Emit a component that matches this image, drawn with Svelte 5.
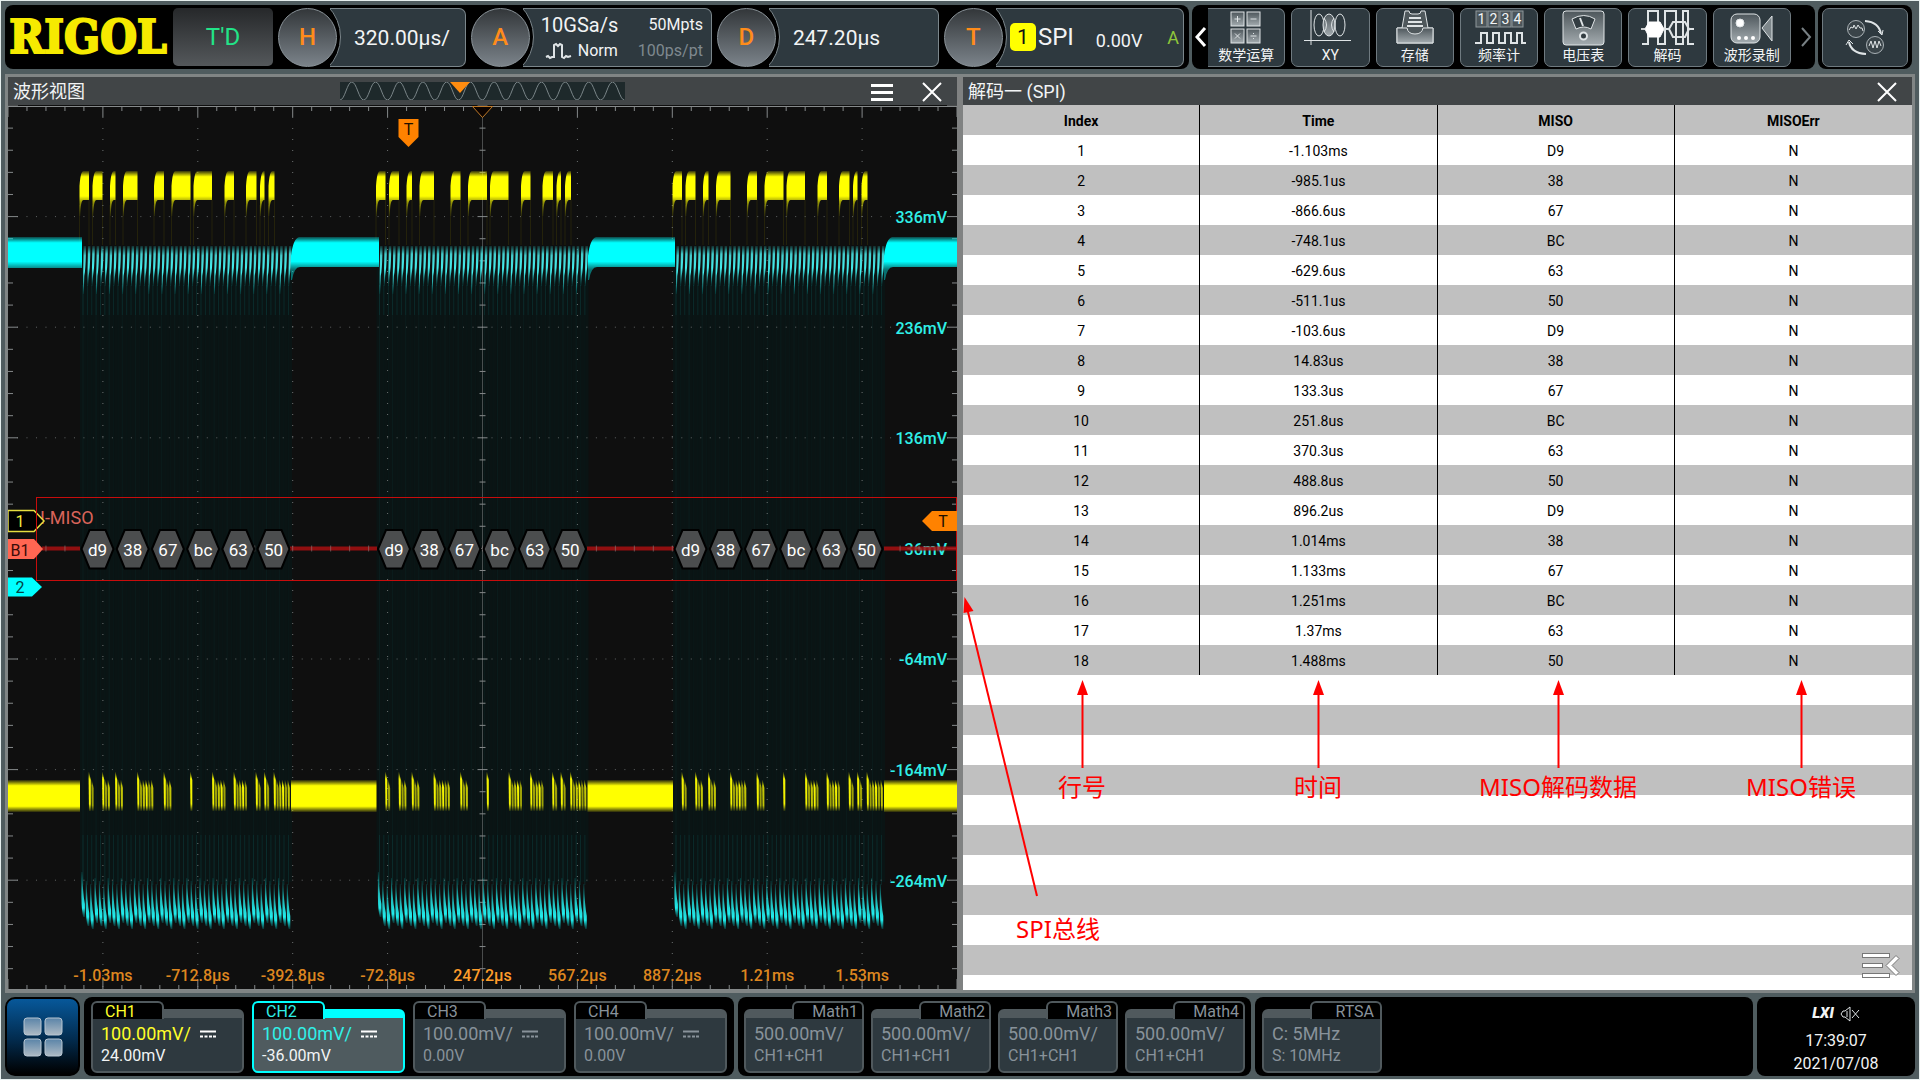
<script>
  const period = 296.5;
  const starts = [0, 1, 2].map((i) => i * period);
  const highs = [[79.5, 89], [92.5, 102.5], [110, 115.5], [123, 137.5], [154, 164], [171.5, 190.5], [193.5, 212], [224.5, 234], [246, 256.5], [260, 264.5], [268.5, 274.5]];
  const lows = [[88.5, 92.5], [102, 110], [115, 123], [137, 154.5], [163.5, 171.5], [190, 193], [212, 225], [233.5, 246.5], [255.5, 259.5], [264, 268], [273.5, 291]];
  const idle = [[8, 80], [291, 376.5], [587.5, 673], [884, 957]];
  const clocks = Array.from({ length: 48 }, (_, i) => 83 + i * 4.37);
  const bytes = ['d9', '38', '67', 'bc', '63', '50'];

  const divX = 94.9;
  const divY = 110.6;
  const cols = Array.from({ length: 9 }, (_, i) => 8 + (i + 1) * divX);
  const rowsY = [1, 2, 3, 5, 6, 7].map((i) => 106 + i * divY);
  const xTicks = Array.from({ length: 51 }, (_, i) => ({ x: 8 + (i * divX) / 5, long: i % 5 === 0 }));
  const yTicks = Array.from({ length: 41 }, (_, i) => ({ y: 106 + (i * divY) / 5, long: i % 5 === 0 }));

  const stripes = lows.flatMap(([a, b]) => {
    const out = [];
    for (let x = a, k = 0; x < b - 1; x += 2.8, k++) out.push({ x, top: k === 0 ? 772 : 780, o: [0.95, 0.6, 0.75][k % 3] });
    return out;
  });

  const volts = ['336mV', '236mV', '136mV', '36mV', '-64mV', '-164mV', '-264mV'];
  const times = ['-1.03ms', '-712.8µs', '-392.8µs', '-72.8µs', '247.2µs', '567.2µs', '887.2µs', '1.21ms', '1.53ms'];

  const data = ['D9', '38', '67', 'BC', '63', '50'];
  const stamps = ['-1.103ms', '-985.1us', '-866.6us', '-748.1us', '-629.6us', '-511.1us', '-103.6us', '14.83us', '133.3us', '251.8us', '370.3us', '488.8us', '896.2us', '1.014ms', '1.133ms', '1.251ms', '1.37ms', '1.488ms'];
  const records = stamps.map((t, i) => [i + 1, t, data[i % 6], 'N']);

  const notes = [[1082, '行号'], [1318, '时间'], [1558, 'MISO解码数据'], [1801, 'MISO错误']];

  const channels = [
    { name: 'CH1', scale: '100.00mV/', offset: '24.00mV', kind: 'one' },
    { name: 'CH2', scale: '100.00mV/', offset: '-36.00mV', kind: 'two' },
    { name: 'CH3', scale: '100.00mV/', offset: '0.00V', kind: 'off' },
    { name: 'CH4', scale: '100.00mV/', offset: '0.00V', kind: 'off' }
  ];
  const maths = ['Math1', 'Math2', 'Math3', 'Math4'];
  const tools = [['math', '数学运算'], ['xy', 'XY'], ['store', '存储'], ['counter', '频率计'], ['meter', '电压表'], ['decode', '解码'], ['record', '波形录制']];
  const miniWave = 'M341 100' + Array.from({ length: 12 }, () => 'c5 0 7 -18 11.85 -18s7 18 11.85 18').join('');
</script>

<div class="app">
  <header>
    <div class="group status">
      <div class="logo">RIGOL</div>
      <button class="run">T'D</button>
      <button class="knob">H</button>
      <div class="panel p1"><span class="big">320.00µs/</span></div>
      <button class="knob">A</button>
      <div class="panel p2">
        <div class="acq">
          <span class="rate">10GSa/s</span><span class="right">50Mpts</span>
          <span class="mode">
            <svg width="28" height="18" viewBox="0 0 28 18"><path d="M1 15l2-1 2 2 2-1h2V3l2-1 2 2 2-2 2 1v12l2 1 2-2 2 1 3-1" /></svg>Norm
          </span><span class="right dim">100ps/pt</span>
        </div>
      </div>
      <button class="knob">D</button>
      <div class="panel p3"><span class="big">247.20µs</span></div>
      <button class="knob">T</button>
      <div class="panel p4">
        <span class="src">1</span><span class="spi">SPI</span><span class="level">0.00V</span><span class="auto">A</span>
      </div>
    </div>

    <div class="group toolbar">
      <button class="arrow" aria-label="上一页"><svg width="12" height="22" viewBox="0 0 12 22"><path d="M10 2L2 11l8 9" /></svg></button>
      {#each tools as [id, label], i}
        <button class="tool" class:first={i === 0}>
          <svg class="ico" width="56" height="36" viewBox="0 0 56 36">
            <defs><linearGradient id="metal-{id}" x1="0" y1="0" x2="0" y2="1"><stop offset="0" stop-color="#4d565b" /><stop offset="1" stop-color="#a4acb0" /></linearGradient></defs>
            {#if id === 'math'}
              {#each [[13, 2], [29, 2], [13, 19], [29, 19]] as [x, y]}
                <rect {x} {y} width="13" height="14" fill="url(#metal-math)" />
              {/each}
              <path d="M16.500 9h6M19.500 6v6M32.500 9h6M17 23.500l5 5M22 23.500l-5 5M32.500 26h6M35.500 23v1M35.500 28v1" />
            {:else if id === 'xy'}
              <path d="M9 0v35M2 30.500h47" />
              <g><ellipse cx="17" cy="15" rx="5" ry="11" /><ellipse cx="27" cy="15" rx="6" ry="11" fill="url(#metal-xy)" /><ellipse cx="38" cy="15" rx="5" ry="11" /><path d="M22 8q5 7 0 14M32 8q-5 7 0 14" /></g>
            {:else if id === 'store'}
              <path d="M18 1h4q0 3 3 3h6q3 0 3-3h4l3 17h5v15H10V18h5z" fill="#4f585c" />
              <path d="M10 18h10q1 6 8 6t8-6h10v15H10z" fill="url(#metal-store)" />
              <path d="M22 8h12M21 12h14M20 16h16" stroke-width="2" />
            {:else if id === 'counter'}
              {#each ['1', '2', '3', '4'] as d, k}
                <rect x={5 + k * 12} y="1" width="11" height="16" fill="#4c565b" stroke="#8e979b" />
                <text x={10.5 + k * 12} y="14" class="digit">{d}</text>
              {/each}
              <path d="M4 33h6V23h6v10h6V23h6v10h6V23h6v10h6V23h5v10h4" stroke-width="2" />
            {:else if id === 'meter'}
              <rect x="8" y="1" width="41" height="34" rx="3" fill="url(#metal-meter)" />
              <path d="M17 9q12-7 23 0l-4 10q-7-4-15 0z" fill="#333d42" /><path d="M25 8l3 8" stroke-width="2" />
              <circle cx="28.500" cy="26" r="3.500" fill="#333d42" stroke-width="2" />
            {:else if id === 'decode'}
              <path d="M2 34h6V1h10v33h7V1h11v33h7V1h5v33h6" stroke-width="2" />
              <path d="M1 19h4l4-7h11l4 7-4 8H9l-4-8z" fill="#fff" stroke="#fff" /><path d="M24 19h5l4-7h12l4 7-4 8H33l-4-8M49 19h5" stroke-width="2" />
            {:else}
              <rect x="7" y="4" width="29" height="29" rx="6" fill="url(#metal-record)" /><path d="M38 18l10-12v25z" fill="#7d868a" />
              <circle cx="16" cy="13" r="4" fill="#fff" /><g fill="#fff" stroke="none"><circle cx="15" cy="28" r="2" /><circle cx="22" cy="28" r="2" /><circle cx="29" cy="28" r="2" /></g>
            {/if}
          </svg>
          <span>{label}</span>
        </button>
      {/each}
      <button class="arrow dimmed" aria-label="下一页"><svg width="12" height="22" viewBox="0 0 12 22"><path d="M2 2l8 9-8 9" /></svg></button>
    </div>

    <div class="group swap">
      <button class="tool" aria-label="切换">
        <svg class="ico" width="44" height="40" viewBox="0 0 44 40">
          <circle cx="13" cy="12" r="8.500" fill="#3a4449" stroke="#aab2b6" /><circle cx="32" cy="28" r="8.500" fill="#3a4449" stroke="#aab2b6" />
          <path d="M6 13l2-3 2 1 1-3 2 4 2-4 2 3 2 0 1 3M26 29l2-5 2 7 2-7 2 7 2-7 2 5" />
          <path d="M22 4q14 1 16 13M23 37Q8 36 6 25" stroke-width="2" /><path d="M35 14l4 4 1-5M3 28l3-5 4 4" />
        </svg>
      </button>
    </div>
  </header>

  <main>
    <section class="window">
      <div class="title">
        <h2>波形视图</h2>
        <svg class="mini" width="285" height="18" viewBox="341 82 285 18"><rect x="341" y="82" width="285" height="18" fill="#1e292b" stroke="none" /><path d={miniWave} /><path class="tri" d="M451 82h20l-10 11z" /></svg>
        <span class="ctl">
          <button aria-label="菜单"><svg width="24" height="20" viewBox="0 0 24 20"><path d="M1 3.500h22M1 10.500h22M1 17.500h22" /></svg></button>
          <button aria-label="关闭"><svg width="20" height="20" viewBox="0 0 20 20"><path class="thin" d="M1 1l18 18M19 1L1 19" /></svg></button>
        </span>
      </div>
      <div class="canvas">
        <svg class="scope" viewBox="8 105 949 885">
          <defs>
            <linearGradient id="yh" x1="0" y1="170" x2="0" y2="215" gradientUnits="userSpaceOnUse"><stop offset="0" stop-color="#ff0" stop-opacity="0" /><stop offset=".15" stop-color="#ff0" /><stop offset=".58" stop-color="#ff0" /><stop offset=".7" stop-color="#ff0" stop-opacity=".6" /><stop offset="1" stop-color="#ff0" stop-opacity=".1" /></linearGradient>
            <linearGradient id="band" x1="0" y1="0" x2="0" y2="1"><stop offset="0" stop-color="#ff0" stop-opacity=".1" /><stop offset=".18" stop-color="#ff0" /><stop offset=".82" stop-color="#ff0" /><stop offset="1" stop-color="#ff0" stop-opacity=".1" /></linearGradient>
            <linearGradient id="cband" x1="0" y1="236" x2="0" y2="270" gradientUnits="userSpaceOnUse"><stop offset="0" stop-color="#0ff" stop-opacity=".1" /><stop offset=".2" stop-color="#0ff" /><stop offset=".75" stop-color="#0ff" /><stop offset=".95" stop-color="#0ff" stop-opacity=".5" /><stop offset="1" stop-color="#0ff" stop-opacity=".4" /></linearGradient>
            <linearGradient id="ch" x1="0" y1="0" x2="0" y2="1"><stop offset="0" stop-color="#2bb" stop-opacity=".2" /><stop offset=".2" stop-color="#4cc" /><stop offset=".55" stop-color="#4ee" /><stop offset=".75" stop-color="#3cc" stop-opacity=".8" /><stop offset="1" stop-color="#0aa" stop-opacity=".15" /></linearGradient>
            <linearGradient id="cl" x1="0" y1="0" x2="0" y2="1"><stop offset="0" stop-color="#0cc" stop-opacity=".15" /><stop offset=".4" stop-color="#2cc" stop-opacity=".85" /><stop offset=".8" stop-color="#2ee" /><stop offset="1" stop-color="#0cc" stop-opacity=".2" /></linearGradient>
          </defs>
          {#each starts as s}
            <rect x={80 + s} y="270" width="212" height="612" fill="#0a1414" />
            {#each clocks as c, i}
              <path d="M{c + s} {285}V885" stroke="#0b2423" stroke-opacity={i % 3 ? 0.2 : 0.5} />
              <path d="M{c + s} 285v30M{c + s} 835v50" stroke="#0e4342" stroke-opacity=".45" />
            {/each}
            {#each highs as [a, b]}
              <path d="M{a + s} 205V245M{b + s} 200V245" stroke="#3a3508" stroke-opacity=".5" />
            {/each}
          {/each}
          <g class="grid">
            {#each cols as x, i}
              {#if i === 4}<path d="M{x} 106V990" stroke-opacity=".5" />{:else}<path class="vdots" d="M{x} 117V990" />{/if}
            {/each}
            {#each rowsY as y}<path class="hdots" d="M17 {y}H957" />{/each}
            {#each xTicks as t}
              <path d="M{t.x} 106v{t.long ? 11 : 5}M{t.x} 990v{t.long ? -11 : -5}" />
            {/each}
            {#each yTicks as t}
              <path d="M8 {t.y}h{t.long ? 10 : 5}M957 {t.y}h{t.long ? -10 : -5}M{t.long ? 477.500 : 479.500} {t.y}h{t.long ? 10 : 6}" />
            {/each}
            <path d="M8 106.500H957M8 989.500H957" />
          </g>
          {#each starts as s}
            {#each clocks as c, i}
              <path d="M{c + s + 0.6} 246h2.400q0 20-1.700 30l-.6 {i % 3 ? 10 : 18}h-.8z" fill="url(#ch)" />
              <path d="M{c + s - 1.6} {i === 0 ? 872 : 878 + (i % 3) * 3}h1q.2 20 2.500 32v13h-1.600q-1.700-6-1.900-20z" fill="url(#cl)" />
            {/each}
            {#each highs as [a, b]}
              <path d="M{a + s} 216V186Q{a + s + 1} 171 {a + s + 4} 171H{b + s}V200H{Math.min(a + s + 4, b + s)}Q{a + s + 1} 200 {a + s + 0.8} 216z" fill="url(#yh)" />
            {/each}
            {#each stripes as t}
              <path d="M{t.x + s} {t.top}h.6l1.700 8V811h-1.800z" fill="url(#band)" opacity={t.o} />
            {/each}
          {/each}
          {#each idle as [a, b]}
            <rect x={a} y="780" width={b - a} height="32" fill="url(#band)" />
          {/each}
          <path d="M8 237H82V268H8zM291 280V256Q293 239 299 237H379V267H300Q294 267 292 280zM588 280V256Q590 239 596 237H675V267H597Q591 267 589 280zM884 280V256Q886 239 892 237H957V267H893Q887 267 885 280z" fill="url(#cband)" />

          {#each volts as v, i}<text class="volt" x="947" y={223 + i * divY}>{v}</text>{/each}
          {#each times as t, i}<text class="time" class:now={i === 4} x={cols[i]} y="981">{t}</text>{/each}

          <path class="bus" d="M42 548.500H80M290 548.500H377M587 548.500H674M884 548.500H957" />
          {#each xTicks as t}<path class="midtick" d="M{t.x} 545.500v6" />{/each}
          {#each starts as s}
            {#each bytes as b, i}
              {@const x = 97.5 + i * 35.2 + s}
              <path class="hex" d="M{x - 16} 549l8-19h16l8 19-8 19.500h-16z" />
              <text class="byte" {x} y="555.500">{b}</text>
            {/each}
          {/each}
          <text class="busname" x="40" y="524">I-MISO</text>
          <path d="M8 510.500H34L44 521 34 531.500H8z" fill="#000" stroke="#e6de40" stroke-width="1.500" />
          <text class="mark" x="20" y="527" fill="#f2ea40">1</text>
          <rect x="36.500" y="497.500" width="920" height="83" stroke="#c80c0c" />
          <path d="M8 539H34L43 549 34 559H8z" fill="#ff6652" /><text class="mark" x="20" y="555.500" fill="#3a0c08">B1</text>
          <path d="M8 577.500H32L42 587 32 596.500H8z" fill="#0ff" /><text class="mark" x="20" y="593" fill="#044">2</text>
          <path d="M957 511H932L922 521 932 531H957z" fill="#ff8200" /><text class="mark" x="943" y="527" fill="#201000">T</text>
          <path d="M398.500 119h20v18l-10 10-10-10z" fill="#ff8200" /><text class="mark" x="408.500" y="135" fill="#201000">T</text>
          <path d="M472.500 106.500h20l-10 11z" fill="#0c0300" stroke="#c07a28" />
        </svg>
      </div>
    </section>

    <section class="window">
      <div class="title">
        <h2>解码一 (SPI)</h2>
        <span class="ctl"><button aria-label="关闭"><svg width="20" height="20" viewBox="0 0 20 20"><path class="thin" d="M1 1l18 18M19 1L1 19" /></svg></button></span>
      </div>
      <div class="canvas list">
        <table>
          <thead><tr><th>Index</th><th>Time</th><th>MISO</th><th>MISOErr</th></tr></thead>
          <tbody>
            {#each records as r}<tr>{#each r as cell}<td>{cell}</td>{/each}</tr>{/each}
          </tbody>
        </table>
        <svg class="notes" viewBox="963 105 949 885">
          {#each notes as [x, label]}
            <path d="M{x + 0.5} 692V768" class="line" /><path d="M{x + 0.5} 680l5.500 15h-11z" class="head" />
            <text {x} y="796">{label}</text>
          {/each}
          <path d="M967.500 610L1037 896" class="line" /><path d="M964.500 597l9 14-10 2z" class="head" />
          <text x="1058" y="938">SPI总线</text>
          <g class="fold"><rect x="1862.500" y="953.500" width="27" height="4" /><rect x="1862.500" y="963.500" width="20" height="4" /><rect x="1862.500" y="973.500" width="27" height="4" /><path d="M1886 965.500l10-10 3 3-7 7 7 7-3 3z" /></g>
        </svg>
      </div>
    </section>
  </main>

  <footer>
    <button class="home" aria-label="主菜单">
      <svg width="40" height="40" viewBox="0 0 40 40">
        <defs><linearGradient id="tile" x1="0" y1="0" x2="0" y2="1"><stop offset="0" stop-color="#5a84a8" /><stop offset="1" stop-color="#aebac4" /></linearGradient></defs>
        {#each [[1, 1], [22, 1], [1, 22], [22, 22]] as [x, y]}<rect {x} {y} width="17" height="17" rx="3" fill="url(#tile)" stroke="#b8c6d2" />{/each}
      </svg>
    </button>
    <div class="group cards">
      {#each channels as c}
        <button class="card {c.kind}">
          <span class="tab">{c.name}</span>
          <span class="body"><span class="scale">{c.scale}<svg width="16" height="8" viewBox="0 0 16 8"><path d="M0 1.500h16M0 6.500h3M4.500 6.500h3M9 6.500h3M13 6.500h3" /></svg></span><span class="offset">{c.offset}</span></span>
        </button>
      {/each}
    </div>
    <div class="group cards math">
      {#each maths as m}
        <button class="card off end"><span class="tab">{m}</span><span class="body"><span class="scale">500.00mV/</span><span class="offset">CH1+CH1</span></span></button>
      {/each}
    </div>
    <div class="group cards rest">
      <button class="card off end rtsa"><span class="tab">RTSA</span><span class="body"><span class="scale">C: 5MHz</span><span class="offset">S: 10MHz</span></span></button>
    </div>
    <div class="group clock">
      <span class="lxi"><b>LXI</b><svg width="20" height="16" viewBox="0 0 20 16"><path d="M1 8l2-3h2l5-4v14l-5-4H3zM7 5v6M12 4l7 8M19 4l-7 8" /></svg></span>
      <span>17:39:07</span><span>2021/07/08</span>
    </div>
  </footer>
</div>

<style>
  :global(body) { margin: 0; }
  .app { box-sizing: border-box; min-height: 100vh; display: flex; flex-direction: column; padding: 4px 4px 3px; border: 1px solid #e6efee; background: #4f5c5f; font-family: Roboto, "Noto Sans CJK SC", sans-serif; color: #f2f4f5; }
  button { font: inherit; color: inherit; margin: 0; padding: 0; border: 0; background: none; }
  svg { display: block; fill: none; stroke: #dfe4e6; }
  svg text { stroke: none; }
  .group { box-sizing: border-box; background: #000; border-radius: 8px; display: flex; align-items: center; }

  header { display: flex; gap: 3px; height: 64px; padding-right: 3px; }
  .status { flex: 1; padding-right: 5px; }
  .logo { width: 168px; padding-right: 2px; box-sizing: border-box; text-align: center; font: bold 47px "DejaVu Serif Condensed", "DejaVu Serif", serif; color: #f6ea00; line-height: 62px; -webkit-text-stroke: 2px #f6ea00; }
  .run { width: 100px; height: 58px; margin-right: 5px; border-radius: 5px; background: linear-gradient(#26282a, #54585b); color: #22e488; font-size: 24px; }
  .knob { position: relative; z-index: 1; flex: none; width: 59px; height: 59px; border-radius: 50%; box-sizing: border-box; border: 1px solid #8b949a; background: linear-gradient(#33373a, #7b838a); color: #ff8c1a; font-size: 24px; font-weight: 500; }
  .panel { position: relative; overflow: hidden; box-sizing: border-box; height: 59px; margin: 0 5px 0 -7px; border: 1px solid #7b868b; border-left: 0; border-radius: 0 7px 7px 0; background: #2e393f; display: flex; align-items: center; min-width: 0; }
  .panel::before { content: ""; position: absolute; box-sizing: border-box; left: -77px; top: -16px; width: 88px; height: 88px; border: 1px solid #7b868b; border-radius: 50%; background: #000; }
  .p1 { flex: 134 1 0; }
  .p2 { flex: 187 1 0; }
  .p3 { flex: 168 1 0; }
  .p4 { flex: 186 1 0; margin-right: 0; }
  .big { padding: 2px 0 0 24px; font-size: 21px; }
  .acq { flex: 1; display: grid; grid-template-columns: auto 1fr; row-gap: 2px; align-items: center; padding: 1px 8px 0 18px; font-size: 16px; line-height: 24px; }
  .rate { font-size: 20px; }
  .right { text-align: right; }
  .dim { color: #7f898f; }
  .mode { display: flex; align-items: center; gap: 5px; padding-left: 4px; }
  .mode svg { stroke-width: 2; }
  .src { position: relative; margin-left: 14px; width: 26px; height: 28px; line-height: 28px; border-radius: 5px; text-align: center; background: #ff0; color: #111; font-size: 21px; }
  .spi { margin-left: 2px; font-family: "Liberation Sans Narrow", Roboto, sans-serif; font-size: 24px; }
  .level { margin-left: 22px; margin-top: 6px; font-size: 18px; }
  .auto { margin-left: auto; padding-right: 4px; font-size: 18px; color: #8fc63a; }

  .toolbar { width: 623px; gap: 6px; }
  .arrow { width: 17px; margin-right: -7px; display: grid; place-items: center; }
  .arrow svg { stroke-width: 3; stroke: #fff; }
  .arrow.dimmed { margin: 0; width: 18px; }
  .dimmed svg { stroke: #788084; stroke-width: 2; }
  .tool { flex: 1; height: 59px; box-sizing: border-box; border: 1px solid #6f7a80; border-radius: 7px; background: #2e393f; display: flex; flex-direction: column; align-items: center; justify-content: center; gap: 0; font-size: 14px; line-height: 18px; white-space: nowrap; }
  .tool.first { border-left: 0; border-radius: 0 7px 7px 0; }
  .ico { stroke-width: 1; }
  .digit { font: 14px Roboto, sans-serif; fill: #f2f5f6; text-anchor: middle; }
  .swap { width: 94px; padding: 0 4px; }

  main { flex: 1; display: grid; grid-template-columns: 1fr 1fr; gap: 6px; margin: 5px 0 4px; border: 3px solid #808585; background: #808282; }
  .window { min-width: 0; display: flex; flex-direction: column; }
  .title { box-sizing: border-box; height: 28px; padding: 1px 15px 0 5px; background: #414547; display: flex; align-items: center; position: relative; }
  h2 { margin: 0; font-size: 18px; font-weight: 400; line-height: 28px; }
  .mini { position: absolute; left: 35%; top: 5px; stroke: #7a8588; }
  .tri { fill: #ff8c10; stroke: none; }
  .ctl { margin-left: auto; display: flex; gap: 28px; align-items: center; }
  .ctl svg { stroke: #fff; stroke-width: 3; }
  .ctl .thin { stroke-width: 2; }
  .canvas { flex: 1; position: relative; background: #0f0f0f; }
  .scope { width: 100%; aspect-ratio: 949 / 885; stroke: none; }
  .grid { stroke: #85898a; stroke-width: 1; }
  .vdots { stroke-dasharray: 1 10; stroke-opacity: .8; }
  .hdots { stroke-dasharray: 1 8.490; stroke-opacity: .7; }
  .volt { fill: #2ff0e8; font-size: 16px; font-weight: 500; text-anchor: end; }
  .time { fill: #dd861f; font-size: 16px; font-weight: 500; text-anchor: middle; }
  .time.now { fill: #ff9d2a; }
  .bus { stroke: #a80f10; stroke-width: 4; stroke-opacity: .85; }
  .midtick { stroke: #8d8080; stroke-opacity: .6; }
  .hex { fill: #4b4d4e; stroke: #000; stroke-width: 2; }
  .byte { fill: #fff; font-size: 17px; text-anchor: middle; }
  .busname { fill: #d9645a; font-size: 18px; }
  .mark { font-size: 16px; text-anchor: middle; }

  .list { background: repeating-linear-gradient(#c0c0c0 0 30px, #fff 30px 60px); color: #000; }
  table { width: 100%; table-layout: fixed; border-collapse: separate; border-spacing: 0; font-size: 14px; }
  th, td { box-sizing: border-box; height: 30px; padding: 2px 0 0; text-align: center; border-right: 1px solid #000; line-height: 20px; }
  th { font-weight: 700; }
  th:last-child, td:last-child { border-right: 0; }
  .notes { position: absolute; inset: 0; width: 100%; height: 100%; pointer-events: none; stroke: none; }
  .notes text { fill: #f00; font: 24px "Noto Sans", "Noto Sans CJK SC", sans-serif; text-anchor: middle; }
  .line { stroke: #f00; stroke-width: 2; }
  .head { fill: #f00; }
  .fold { fill: #fff; stroke: #777; }

  footer { display: flex; gap: 4px; height: 79px; }
  .home { width: 75px; box-sizing: border-box; border: 2px solid #000; border-radius: 10px; background: linear-gradient(#07589a, #022a4c 55%, #000); display: grid; place-items: center; }
  .cards { width: 650px; gap: 8px; padding: 4px 7px 3px; align-items: stretch; }
  .math { width: 513px; gap: 7px; padding: 4px 6px 3px 6px; }
  .rest { flex: 1; width: auto; }
  .card { --line: #50595d; position: relative; flex: 1; box-sizing: border-box; padding-top: 8px; text-align: left; display: flex; }
  .rtsa { flex: none; width: 120px; }
  .body { flex: 1; box-sizing: border-box; border: 2px solid var(--line); border-top-width: 9px; border-radius: 6px; background: #2e393f; padding: 4px 0 0 8px; display: flex; flex-direction: column; }
  .tab { position: absolute; left: 0; top: 0; box-sizing: border-box; width: 73px; height: 18px; padding-left: 12px; border: 2px solid var(--line); border-bottom: 0; border-radius: 6px 6px 0 0; background: #000; font-size: 16px; line-height: 18px; }
  .end .tab { left: auto; right: 0; width: 72px; padding: 0 4px 0 0; text-align: right; }
  .rtsa .tab { padding-right: 6px; }
  .scale { display: flex; align-items: center; gap: 9px; font-size: 18px; line-height: 24px; }
  .scale svg { stroke: #fff; stroke-width: 2; }
  .offset { font-size: 16px; line-height: 20px; }
  .one .tab, .one .scale { color: #ffff28; }
  .two { --line: #00ffff; }
  .two .body { background: #4f5b5f; }
  .two .tab, .two .scale { color: #2ff0e8; }
  .off { color: #88929a; }
  .off .scale svg { stroke: #88929a; }
  .clock { width: 158px; flex-direction: column; justify-content: center; padding-top: 4px; font-size: 16px; line-height: 23px; }
  .lxi { display: flex; align-items: center; gap: 6px; padding-bottom: 4px; }
  .lxi b { font-style: italic; font-weight: 900; font-size: 15px; }
</style>
